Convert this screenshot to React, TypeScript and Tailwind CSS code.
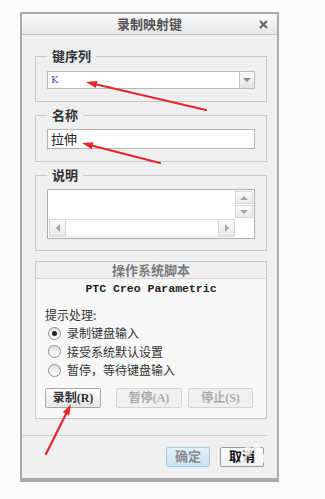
import React from "react";

const sans = "font-['Noto_Sans_CJK_SC',sans-serif]";
const serif = "font-['Liberation_Serif','Noto_Sans_CJK_SC',serif]";

const Arrow = ({ x1, y1, x2, y2 }: { x1: number; y1: number; x2: number; y2: number }) => {
  const a = Math.atan2(y2 - y1, x2 - x1);
  const len = 11;
  const w = 3.6;
  const bx = x2 - Math.cos(a) * len;
  const by = y2 - Math.sin(a) * len;
  const px = -Math.sin(a) * w;
  const py = Math.cos(a) * w;
  return (
    <g>
      <line x1={x1} y1={y1} x2={bx} y2={by} stroke="#e5262b" strokeWidth={2.2} strokeLinecap="round" />
      <polygon points={`${x2},${y2} ${bx + px},${by + py} ${bx - px},${by - py}`} fill="#e5262b" />
    </g>
  );
};

const Tri = ({ dir }: { dir: "up" | "down" | "left" | "right" }) => {
  const pts = {
    up: "1,5 5,1 9,5",
    down: "1,1 9,1 5,5",
    left: "5,1 5,9 1,5",
    right: "1,1 1,9 5,5",
  }[dir];
  const vertical = dir === "up" || dir === "down";
  return (
    <svg width={vertical ? 10 : 6} height={vertical ? 6 : 10}>
      <polygon points={pts} fill="#a3a3a3" />
    </svg>
  );
};

const ScrollBtn = ({ dir, className = "" }: { dir: "up" | "down" | "left" | "right"; className?: string }) => (
  <div
    className={`flex items-center justify-center border border-[#d6d6d6] bg-gradient-to-b from-[#fafafa] to-[#e9e9e9] ${className}`}
  >
    <Tri dir={dir} />
  </div>
);

const Radio = ({ checked, label }: { checked?: boolean; label: string }) => (
  <div className="flex h-[18.5px] items-center">
    <div className="ml-[3px] flex h-[13px] w-[13px] items-center justify-center rounded-full border border-[#8d8d8d] bg-gradient-to-b from-[#e2e2e2] to-[#ffffff]">
      {checked && <div className="h-[5px] w-[5px] rounded-full bg-[#222]" />}
    </div>
    <span className={`ml-[6px] text-[12px] leading-[16px] text-[#333] ${sans}`}>{label}</span>
  </div>
);

const Legend = ({ children }: { children: React.ReactNode }) => (
  <legend className={`px-[5px] text-[13px] font-bold leading-[16px] text-[#333] ${sans}`}>{children}</legend>
);

export default function App() {
  return (
    <div className="relative h-[499px] w-[325px] overflow-hidden bg-[#fbfbfb] pl-[20px] pt-[12px]">
      <div className="flex h-[470px] w-[259px] flex-col border-2 border-b-[4px] border-[#a9a9a9] bg-[#eeeff1]">
        {/* title bar */}
        <div className="relative flex h-[21px] shrink-0 items-center justify-center border-b border-[#c3c4c6] bg-gradient-to-b from-[#fbfbfb] to-[#e5e6e7]">
          <span className={`text-[13px] font-bold leading-[16px] text-[#555] ${sans}`}>录制映射键</span>
          <svg className="absolute right-[9px] top-[6px]" width="9" height="9" viewBox="0 0 9 9">
            <path d="M1 1 L8 8 M8 1 L1 8" stroke="#6b6b6b" strokeWidth="2.3" />
          </svg>
        </div>

        <div className="pl-[13px] pr-[10px] pt-[13px]">
          <fieldset className="min-w-0 border border-[#c7c8ca] px-[11px] pb-[12px] pt-[7px]">
            <Legend>键序列</Legend>
            <div className="flex h-[18px] border border-[#b9babc] bg-white">
              <span className="flex-1 pl-[3px] font-['DejaVu_Serif',serif] text-[10px] leading-[16px] text-[#4b4fc0]">K</span>
              <div className="flex w-[15px] items-center justify-center border-l border-[#c6c6c6] bg-gradient-to-b from-[#fafafa] to-[#e4e4e4]">
                <svg width="8" height="5">
                  <polygon points="0,0 8,0 4,4" fill="#8a8a8a" />
                </svg>
              </div>
            </div>
          </fieldset>

          <fieldset className="mt-[5px] min-w-0 border border-[#c7c8ca] px-[11px] pb-[12px] pt-[6px]">
            <Legend>名称</Legend>
            <div className={`h-[20px] border border-[#b3b4b6] bg-white pl-[3px] text-[13px] leading-[18px] text-[#222] ${sans}`}>
              拉伸
            </div>
          </fieldset>

          <fieldset className="mt-[5px] min-w-0 border border-[#c7c8ca] px-[11px] pb-[11px] pt-[6px]">
            <Legend>说明</Legend>
            <div className="flex h-[50px] border border-[#acadaf] bg-white p-[1px]">
              <div className="flex flex-1 flex-col">
                <div className="flex-1" />
                <div className="flex h-[18px]">
                  <ScrollBtn dir="left" className="w-[17px]" />
                  <div className="flex-1 border-y border-[#e2e2e2]" />
                  <ScrollBtn dir="right" className="w-[17px]" />
                </div>
              </div>
              <div className="flex w-[18px] flex-col gap-[1px]">
                <ScrollBtn dir="up" className="h-[13px]" />
                <ScrollBtn dir="down" className="h-[13px]" />
              </div>
            </div>
          </fieldset>

          <div className="mt-[10px] border border-[#c7c8ca]">
            <div className={`h-[17px] border-b border-[#d2d3d5] bg-[#eeeff1] text-center text-[13px] font-bold leading-[16px] text-[#7b7b7b] ${sans}`}>
              操作系统脚本
            </div>
            <div className="bg-[#f8f8f8] px-[9px] pb-[10px] pt-[3px]">
              <div className="text-center font-['Liberation_Mono',monospace] text-[11.5px] font-bold leading-[14px] text-[#222]">
                PTC Creo Parametric
              </div>
              <div className={`mt-[10px] text-[12px] leading-[18px] text-[#333] ${sans}`}>提示处理:</div>
              <Radio checked label="录制键盘输入" />
              <Radio label="接受系统默认设置" />
              <Radio label="暂停，等待键盘输入" />
              <div className={`mt-[8px] flex text-[12px] font-bold ${serif}`}>
                <div className="flex h-[20px] w-[56px] items-center justify-center rounded-[2px] border border-[#a7a7a7] bg-gradient-to-b from-[#fdfdfd] to-[#e6e6e6] text-[#333]">
                  录制(R)
                </div>
                <div className="ml-[15px] flex h-[20px] w-[66px] items-center justify-center rounded-[2px] border border-[#d3d3d3] bg-[#f0f0f0] text-[#a9a9a9]">
                  暂停(A)
                </div>
                <div className="ml-[6px] flex h-[20px] w-[65px] items-center justify-center rounded-[2px] border border-[#d3d3d3] bg-[#f0f0f0] text-[#a9a9a9]">
                  停止(S)
                </div>
              </div>
            </div>
          </div>
        </div>

        <div className="mr-[10px] mt-[16px] h-px bg-[#cfd0d2]" />

        <div className={`mt-[11px] flex justify-end gap-[10px] pr-[13px] text-[13px] font-bold ${serif}`}>
          <div className="flex h-[20px] w-[44px] items-center justify-center rounded-[2px] border border-[#a3cbe6] bg-gradient-to-b from-[#e2f0fa] to-[#c9e3f4] text-[#8a8a8a]">
            确定
          </div>
          <div className="flex h-[20px] w-[44px] items-center justify-center rounded-[2px] border border-[#9a9a9a] bg-gradient-to-b from-[#ffffff] to-[#f1f1f1] text-[#111]">
            取消
          </div>
        </div>
      </div>

      {/* annotations */}
      <svg className="pointer-events-none absolute left-0 top-0" width="325" height="499">
        <g fill="#ffffff" stroke="#e4e4e4" strokeWidth="0.8" opacity="0.75">
          <ellipse cx="248" cy="451" rx="3.5" ry="5" />
          <ellipse cx="257" cy="448" rx="3.5" ry="5" />
          <ellipse cx="262" cy="458" rx="3" ry="4.5" />
          <ellipse cx="243" cy="461" rx="3" ry="4" />
        </g>
        <Arrow x1={206} y1={110} x2={86} y2={82} />
        <Arrow x1={160} y1={163} x2={82} y2={143} />
        <Arrow x1={46} y1={454} x2={71} y2={404} />
      </svg>
    </div>
  );
}
